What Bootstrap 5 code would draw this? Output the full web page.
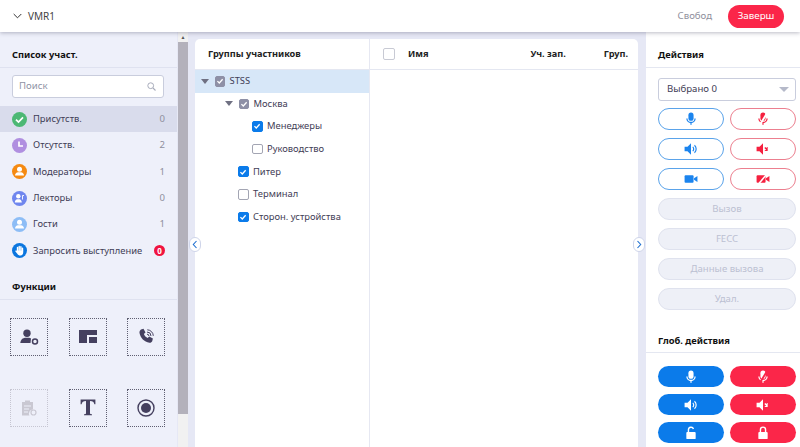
<!DOCTYPE html>
<html lang="ru"><head><meta charset="utf-8"><title>VMR1</title>
<link href="https://cdn.jsdelivr.net/npm/bootstrap@5.3.0/dist/css/bootstrap.min.css" rel="stylesheet">
<style>
html,body{height:447px;overflow:hidden}
body{font-family:"Noto Sans","Open Sans",sans-serif;font-size:9.4px;color:#3f3d56;background:#e6e8f5}
.topbar{height:32px;background:#fff;box-shadow:0 1px 4px rgba(60,60,90,.35);position:relative;z-index:3;padding:0 16px 0 13px}
.room{font-size:10px;color:#444;gap:6px}
.free{color:#8f8f9d;font-size:9.6px;margin-right:16px}
.endbtn{width:56px;height:23px;border-radius:12px;background:#fb2649;color:#fff;font-size:9.8px}
.work{height:415px}
.lefty{width:177px;background:#eef0fa;flex:none}
.scrolly{width:10px;margin-left:1px;background:#f1f1f1;flex:none}
.scrolly i{display:block;height:10px;color:#555;font-style:normal;font-size:5px;line-height:10px;text-align:center}
.scrolly b{display:block;height:372px;background:#b3b1bb}
.headx{height:36px;padding:16px 12px 0;font-weight:700;font-size:9.3px;color:#111;border-bottom:1px solid #dfe2f0}
.searchy{margin:7px 13px 8px 12px;height:23px;background:#fff;border:1px solid #c9cddd;border-radius:3px;padding:0 7px 0 6px;color:#8f93a5;font-size:9.6px}
.stat{height:26.3px;padding:0 12px;color:#3f3d56}
.stat.on{background:#d9dcec}
.stat .num{margin-left:auto;color:#8f8f9d;font-size:9.6px}
.dot{width:15px;height:15px;border-radius:50%;margin-right:6px;flex:none}
.d-green{background:#4cb874}.d-purple{background:#b08fe0}.d-orange{background:#f58a12}.d-indigo{background:#6f86ee}.d-sky{background:#8dbdf6}.d-blue{background:#0b76df}
.redn{width:11px;height:11px;border-radius:50%;background:#f0143f;color:#fff;font-size:8px;font-weight:700;line-height:11px;text-align:center;margin-left:auto}
.funcs{height:32px;padding:12px 12px 0;margin-top:4px;font-weight:700;font-size:9.3px;color:#111;border-bottom:1px solid #dfe2f0}
.grida{display:grid;grid-template-columns:repeat(3,38px);column-gap:20.5px;row-gap:33px;padding:18px 0 0 10px}
.tool{width:38px;height:38px;border:1px dotted #5f5f72}
.tool.off{border-color:#c6c6d2}
.midcard{width:443px;margin:7px 8px 0 7px;background:#fff;border-radius:5px 5px 0 0;position:relative;flex:none}
.grp{width:175px;border-right:1px solid #e6e8f2;flex:none}
.hd{height:31px;border-bottom:1px solid #e4e7f1;font-weight:700;font-size:9.2px;color:#222}
.grp .hd{padding-left:13px}
.tr{height:22.6px;color:#3f3d56}
.tr.sel{background:#d7e7f8}
.chk{width:10.5px;height:10.5px;border-radius:2px;border:1px solid #a3a5b3;background:#fff;margin-right:4.5px;flex:none;display:flex;align-items:center;justify-content:center}
.chk.b{background:#0b7bea;border-color:#0b7bea}
.chk.g{background:#8e90a6;border-color:#8e90a6}
.caret{width:0;height:0;border:4px solid transparent;border-top:5px solid #6f7082;border-bottom:0;margin-right:5.5px}
.i1{padding-left:6px}.i2{padding-left:30px}.i3{padding-left:43px}.i4{padding-left:57px}
.listc{flex:1;min-width:0}
.listc .hd{padding-right:10px}
.tall{width:12px;height:12px;border-radius:2px;border:1px solid #c8cad4;margin:0 13px;flex:none}
.grup-col{margin-left:38px}
.handle{position:absolute;top:198px;width:12px;height:15px;background:#fff;border:1px solid #cfd5ea;border-radius:7px;display:flex;align-items:center;justify-content:center;z-index:2}
.h-l{left:-6px}.h-r{right:-7px}
.rightp{flex:1;background:#fff;min-width:0;--cut:#fff}
.rgrid{display:grid;grid-template-columns:66px 66px;gap:8px 6px;padding:0 0 0 12px}
.sel-x{margin:10px 4px 7px 12px;height:23px;border:1px solid #c9cddd;border-radius:3px;padding:0 6px 0 8px;color:#3f3d56;font-size:9.6px}
.tri{width:0;height:0;border:5px solid transparent;border-top:5px solid #b5b9c9;border-bottom:0}
.pill{height:22px;border-radius:11px;display:flex;align-items:center;justify-content:center}
.pb{border:1.2px solid #5aa3ea;color:#1b84ee}.pr{border:1.2px solid #ec7f8f;color:#f5203f}
.dis{margin:7.5px 4px 0 12px;height:22.5px;border-radius:11.5px;background:#eef0f7;border:1px solid #dfe2ee;color:#bcc0d2;font-size:9.6px}
.fb{background:#0b7bea;color:#fff;height:21px;border-radius:10.5px}.fr{background:#fb2649;color:#fff;height:21px;border-radius:10.5px;--cut:#fb2649}
.rgrid2{display:grid;grid-template-columns:66px 66px;gap:7px 6px;padding:13px 0 0 12px}
.hd2{height:36px;padding:16px 12px 0;font-weight:700;font-size:9.3px;color:#111;border-bottom:1px solid #e4e7f1}
.hd3{height:37px;margin-top:6px;padding:18px 12px 0;font-weight:700;font-size:9.3px;color:#111;border-bottom:1px solid #e4e7f1}
svg{display:block}
</style></head><body>
<svg width="0" height="0" class="position-absolute"><defs>
<symbol id="mic" viewBox="0 0 12 12"><rect x="3.8" y="0.5" width="4.4" height="7" rx="2.2" fill="currentColor"/><path d="M2.5 5.5a3.5 3.5 0 0 0 7 0M6 9v2" fill="none" stroke="currentColor" stroke-width="1.1"/></symbol>
<symbol id="micx" viewBox="0 0 12 12"><rect x="3.8" y="0.5" width="4.4" height="7" rx="2.2" fill="currentColor"/><path d="M2.5 5.5a3.5 3.5 0 0 0 7 0M6 9v2" fill="none" stroke="currentColor" stroke-width="1.1"/><path d="M9.8 .5L3 11.5" style="stroke:var(--cut)" stroke-width="1.6"/></symbol>
<symbol id="spk" viewBox="0 0 12 12"><path d="M.5 4h2.5l3-3v10L3 8H.5z" fill="currentColor"/><path d="M7.5 4.2a2.4 2.4 0 0 1 0 3.6M9 2.800a4.300 4.300 0 0 1 0 6.400" fill="none" stroke="currentColor" stroke-width="1"/></symbol>
<symbol id="spkx" viewBox="0 0 12 12"><path d="M.5 4h2.5l3-3v10L3 8H.5z" fill="currentColor"/><path d="M7.6 4.8l2.4 2.4M10 4.8L7.6 7.2" stroke="currentColor" stroke-width="1.2"/></symbol>
<symbol id="cam" viewBox="0 0 12 12"><rect x=".5" y="2.8" width="7.7" height="6.4" rx=".8" fill="currentColor"/><path d="M8.6 5.4L11.5 3.500v5L8.6 6.600z" fill="currentColor"/></symbol>
<symbol id="camx" viewBox="0 0 12 12"><rect x=".5" y="2.8" width="7.7" height="6.4" rx=".8" fill="currentColor"/><path d="M8.6 5.4L11.5 3.500v5L8.6 6.600z" fill="currentColor"/><path d="M9.5 1.5L2 10.5" style="stroke:var(--cut)" stroke-width="1.3"/></symbol>
<symbol id="unl" viewBox="0 0 12 12"><rect x="2" y="5.2" width="8" height="6" rx=".8" fill="currentColor"/><path d="M3.8 5.2V3.2a2.2 2.2 0 0 1 4.3-.6" fill="none" stroke="currentColor" stroke-width="1.2"/></symbol>
<symbol id="lck" viewBox="0 0 12 12"><rect x="2" y="5.2" width="8" height="6" rx=".8" fill="currentColor"/><path d="M3.8 5.2V3.2a2.2 2.2 0 0 1 4.4 0v2" fill="none" stroke="currentColor" stroke-width="1.2"/></symbol>
<symbol id="usr" viewBox="0 0 15 15"><circle cx="7.5" cy="5.3" r="2.5" fill="#fff"/><path d="M3 11.500c0-1.800 1.500-3 3-3.200h3c1.500.2 3 1.400 3 3.200z" fill="#fff"/></symbol>
<symbol id="tick" viewBox="0 0 10 10"><path d="M1.8 5.2l2.3 2.3L8.3 2.800" fill="none" stroke="#fff" stroke-width="1.6"/></symbol>
</defs></svg>

<div class="topbar d-flex align-items-center">
  <div class="room d-flex align-items-center"><svg width="9" height="6" viewBox="0 0 9 6"><path d="M.7 1l3.8 3.8L8.3 1" fill="none" stroke="#333" stroke-width="1"/></svg><span>VMR1</span></div>
  <span class="free ms-auto">Свобод</span>
  <div class="endbtn d-flex align-items-center justify-content-center">Заверш</div>
</div>

<div class="work d-flex">
  <aside class="lefty">
    <div class="headx">Список участ.</div>
    <div class="searchy d-flex align-items-center justify-content-between"><span>Поиск</span><svg width="9" height="9" viewBox="0 0 9 9"><circle cx="3.7" cy="3.7" r="2.9" fill="none" stroke="#a8acbb" stroke-width="1"/><path d="M6 6l2.5 2.5" stroke="#a8acbb" stroke-width="1.1"/></svg></div>
    <div class="stat on d-flex align-items-center"><span class="dot d-green d-flex"><svg width="15" height="15" viewBox="0 0 15 15"><path d="M4 7.6l2.5 2.5L11 5.3" fill="none" stroke="#fff" stroke-width="1.7"/></svg></span>Присутств.<span class="num">0</span></div>
    <div class="stat d-flex align-items-center"><span class="dot d-purple d-flex"><svg width="15" height="15" viewBox="0 0 15 15"><path d="M7 3.500v4.500h4" fill="none" stroke="#fff" stroke-width="1.7"/></svg></span>Отсутств.<span class="num">2</span></div>
    <div class="stat d-flex align-items-center"><span class="dot d-orange d-flex"><svg width="15" height="15"><use href="#usr"/></svg></span>Модераторы<span class="num">1</span></div>
    <div class="stat d-flex align-items-center"><span class="dot d-indigo d-flex"><svg width="15" height="15" viewBox="0 0 15 15"><circle cx="6.300" cy="5.300" r="2.200" fill="#fff"/><path d="M2.800 11.500c0-2 1.300-3 2.400-3.200h2.300c1 .2 2.300 1.200 2.300 3.200z" fill="#fff"/><path d="M10.500 4.500v4M10.500 4.500h1.500" stroke="#fff" stroke-width=".9"/></svg></span>Лекторы<span class="num">0</span></div>
    <div class="stat d-flex align-items-center"><span class="dot d-sky d-flex"><svg width="15" height="15"><use href="#usr"/></svg></span>Гости<span class="num">1</span></div>
    <div class="stat d-flex align-items-center"><span class="dot d-blue d-flex"><svg width="15" height="15" viewBox="0 0 15 15"><path d="M5.500 8V4.500M7.200 7.500V3.500M8.900 7.500V3.800M10.500 8V5.200" fill="none" stroke="#fff" stroke-width="1.400" stroke-linecap="round"/><path d="M4.800 7.500h6.400v2.300c0 1.500-1.300 2.700-2.900 2.700-1.500 0-2.400-.7-3-1.800L3.400 8.500c-.4-.8.600-1.400 1.400-.6z" fill="#fff"/></svg></span>Запросить выступление<span class="redn">0</span></div>
    <div class="funcs">Функции</div>
    <div class="grida">
      <div class="tool d-flex align-items-center justify-content-center"><svg width="19" height="16" viewBox="0 0 19 16"><circle cx="7" cy="4.200" r="3.700" fill="#45405f"/><path d="M.3 14c.3-3.500 2.800-5 4.700-5.200h4c.8.100 1.500.4 2 .8L10.500 14z" fill="#45405f"/><circle cx="15" cy="12.500" r="2.500" fill="none" stroke="#45405f" stroke-width="1.500"/></svg></div>
      <div class="tool d-flex align-items-center justify-content-center"><svg width="18" height="13" viewBox="0 0 18 13"><path d="M0 0h18v5H8v8H0z" fill="#45405f"/><path d="M10 7h8v6h-8z" fill="#45405f"/></svg></div>
      <div class="tool d-flex align-items-center justify-content-center"><svg width="17" height="17" viewBox="0 0 17 17"><path d="M3 1.500l2.500-.7 2 3.700-1.600 1.500c.6 1.800 2.100 3.300 3.800 4l1.500-1.500 3.700 2-.7 2.700c-.4 1-1.600 1.700-2.700 1.500C6 14 2.500 9.800 1.500 5 1.300 3.500 1.900 2.200 3 1.500z" fill="#45405f"/><path d="M9 4a4 4 0 0 1 4 4M9.300 1.800a6.200 6.200 0 0 1 6 6M9 6.200a1.800 1.800 0 0 1 1.900 1.800" fill="none" stroke="#45405f" stroke-width="1"/></svg></div>
      <div class="tool off d-flex align-items-center justify-content-center"><svg width="16" height="17" viewBox="0 0 16 17"><path d="M1 3h3V1.500h5V3h3v7.500a4 4 0 0 0-3.500 6H1z" fill="#c9c8d2"/><path d="M3 7h7M3 10h5M3 13h4" stroke="#eef0fa" stroke-width="1"/><circle cx="12.500" cy="13.500" r="2.500" fill="none" stroke="#c9c8d2" stroke-width="1.200"/></svg></div>
      <div class="tool d-flex align-items-center justify-content-center"><svg width="16" height="17" viewBox="0 0 16 17"><path d="M.6.600h14.800v4.600h-1C13.900 3 12.800 2 10 2v12.300c0 .7.700 1 2 1v1H4v-1c1.300 0 2-.3 2-1V2C3.200 2 2.100 3 1.600 5.200h-1z" fill="#45405f"/></svg></div>
      <div class="tool d-flex align-items-center justify-content-center"><svg width="18" height="18" viewBox="0 0 18 18"><circle cx="9" cy="9" r="8" fill="none" stroke="#45405f" stroke-width="1.400"/><circle cx="9" cy="9" r="5" fill="#45405f"/></svg></div>
    </div>
  </aside>
  <div class="scrolly"><i>▲</i><b></b></div>

  <main class="midcard d-flex">
    <span class="handle h-l"><svg width="6" height="9" viewBox="0 0 6 9"><path d="M4.500 1L1.300 4.500 4.500 8" fill="none" stroke="#1f6fd0" stroke-width="1.100"/></svg></span>
    <span class="handle h-r"><svg width="6" height="9" viewBox="0 0 6 9"><path d="M1.500 1l3.200 3.500L1.500 8" fill="none" stroke="#1f6fd0" stroke-width="1.100"/></svg></span>
    <section class="grp">
      <div class="hd d-flex align-items-center">Группы участников</div>
      <div class="tr sel i1 d-flex align-items-center"><span class="caret"></span><span class="chk g"><svg width="8" height="8"><use href="#tick"/></svg></span>STSS</div>
      <div class="tr i2 d-flex align-items-center"><span class="caret"></span><span class="chk g"><svg width="8" height="8"><use href="#tick"/></svg></span>Москва</div>
      <div class="tr i4 d-flex align-items-center"><span class="chk b"><svg width="8" height="8"><use href="#tick"/></svg></span>Менеджеры</div>
      <div class="tr i4 d-flex align-items-center"><span class="chk"></span>Руководство</div>
      <div class="tr i3 d-flex align-items-center"><span class="chk b"><svg width="8" height="8"><use href="#tick"/></svg></span>Питер</div>
      <div class="tr i3 d-flex align-items-center"><span class="chk"></span>Терминал</div>
      <div class="tr i3 d-flex align-items-center"><span class="chk b"><svg width="8" height="8"><use href="#tick"/></svg></span>Сторон. устройства</div>
    </section>
    <section class="listc">
      <div class="hd d-flex align-items-center"><span class="tall"></span><span>Имя</span><span class="ms-auto">Уч. зап.</span><span class="grup-col">Груп.</span></div>
    </section>
  </main>

  <aside class="rightp">
    <div class="hd2">Действия</div>
    <div class="sel-x d-flex align-items-center justify-content-between"><span>Выбрано 0</span><span class="tri"></span></div>
    <div class="rgrid">
      <div class="pill pb"><svg width="14" height="14"><use href="#mic"/></svg></div><div class="pill pr"><svg width="14" height="14"><use href="#micx"/></svg></div>
      <div class="pill pb"><svg width="14" height="14"><use href="#spk"/></svg></div><div class="pill pr"><svg width="14" height="14"><use href="#spkx"/></svg></div>
      <div class="pill pb"><svg width="14" height="14"><use href="#cam"/></svg></div><div class="pill pr"><svg width="14" height="14"><use href="#camx"/></svg></div>
    </div>
    <div class="dis d-flex align-items-center justify-content-center">Вызов</div>
    <div class="dis d-flex align-items-center justify-content-center">FECC</div>
    <div class="dis d-flex align-items-center justify-content-center">Данные вызова</div>
    <div class="dis d-flex align-items-center justify-content-center">Удал.</div>
    <div class="hd3">Глоб. действия</div>
    <div class="rgrid2">
      <div class="pill fb"><svg width="14" height="14"><use href="#mic"/></svg></div><div class="pill fr"><svg width="14" height="14"><use href="#micx"/></svg></div>
      <div class="pill fb"><svg width="14" height="14"><use href="#spk"/></svg></div><div class="pill fr"><svg width="14" height="14"><use href="#spkx"/></svg></div>
      <div class="pill fb"><svg width="14" height="14"><use href="#unl"/></svg></div><div class="pill fr"><svg width="14" height="14"><use href="#lck"/></svg></div>
    </div>
  </aside>
</div>
</body></html>
